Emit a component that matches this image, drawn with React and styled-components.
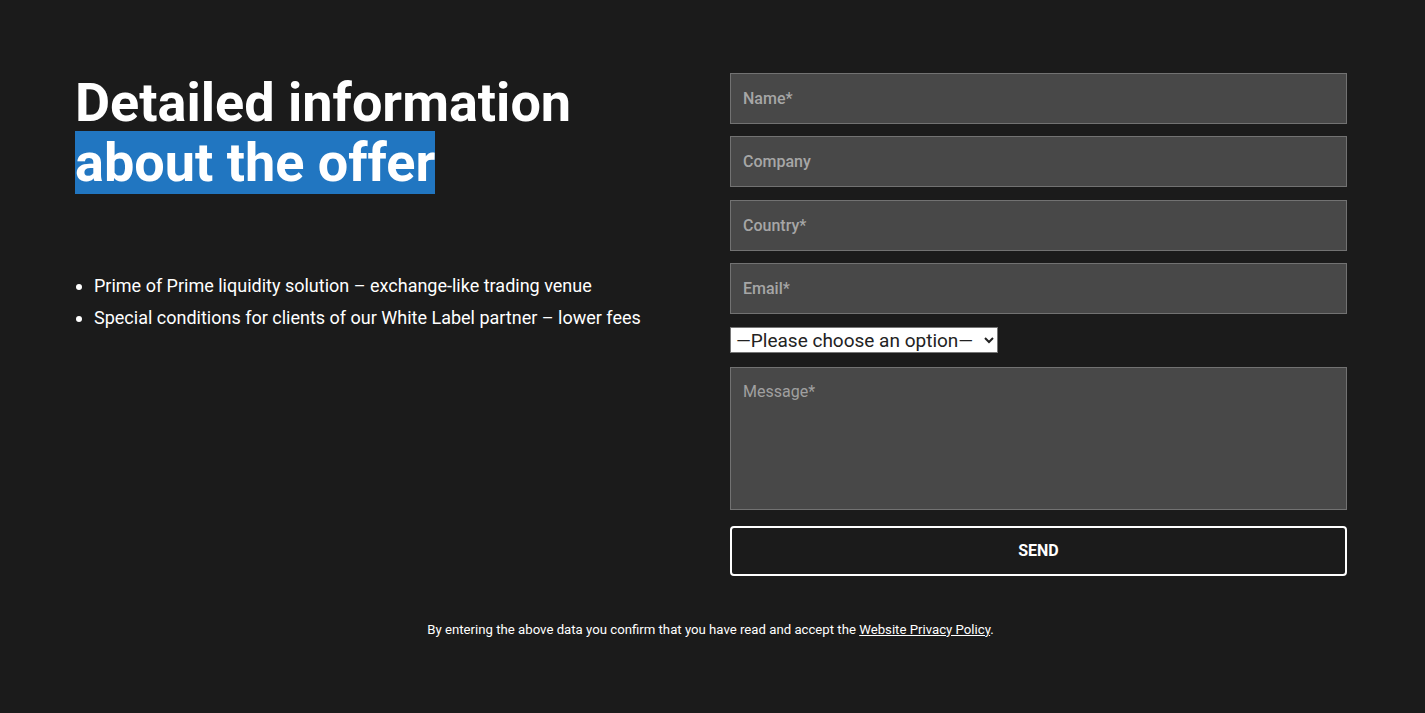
import React from 'react'
import styled, { createGlobalStyle } from 'styled-components'

const GlobalStyle = createGlobalStyle`
  * { box-sizing: border-box; }
  body {
    margin: 0;
    background: #1b1b1b;
    font-family: Roboto, "Liberation Sans", sans-serif;
    color: #fff;
  }
`

export default function App() {
  return (
    <Page>
      <GlobalStyle />
      <Container>
        <InfoColumn>
          <Heading>
            Detailed information
            <br />
            <Highlight>about the offer</Highlight>
          </Heading>
          <Bullets>
            <li>Prime of Prime liquidity solution – exchange-like trading venue</li>
            <li>Special conditions for clients of our White Label partner – lower fees</li>
          </Bullets>
        </InfoColumn>

        <Form onSubmit={e => e.preventDefault()}>
          <Field placeholder="Name*" />
          <Field placeholder="Company" />
          <Field placeholder="Country*" />
          <Field placeholder="Email*" />
          <Select defaultValue="">
            <option value="">—Please choose an option—</option>
          </Select>
          <Message placeholder="Message*" />
          <SendButton type="submit">SEND</SendButton>
        </Form>
      </Container>

      <Notice>
        By entering the above data you confirm that you have read and accept the{' '}
        <a href="#">Website Privacy Policy</a>.
      </Notice>
    </Page>
  )
}

const Page = styled.div`
  min-height: 713px;
  padding-top: 73px;
  padding-bottom: 60px;
`

const Container = styled.div`
  padding: 0 78px 0 75px;
  display: grid;
  grid-template-columns: 1fr 617px;
  gap: 40px;
`

const InfoColumn = styled.div`
  display: flex;
  flex-direction: column;
`

const Heading = styled.h2`
  margin: 0;
  font-size: 54px;
  line-height: 60px;
  font-weight: 700;
  color: #fff;
`

const Highlight = styled.span`
  background: #2176c1;
`

const Bullets = styled.ul`
  margin: 77px 0 0;
  padding-left: 19px;
  font-size: 18px;
  line-height: 32px;
  color: #fff;
`

const Form = styled.form`
  display: flex;
  flex-direction: column;
  gap: 12.4px;
`

const Field = styled.input`
  height: 51px;
  width: 100%;
  background: #484848;
  border: 1px solid #727272;
  padding: 0 12px;
  font-family: Roboto, "Liberation Sans", sans-serif;
  font-size: 16px;
  font-weight: 500;
  color: #fff;
  outline: none;

  &::placeholder {
    color: #a6a6a6;
  }
`

const Select = styled.select`
  align-self: flex-start;
  width: 268px;
  height: 26px;
  margin: 0.4px 0 1.6px;
  font-family: Roboto, "Liberation Sans", sans-serif;
  font-size: 19px;
  color: #222;
  background: #fff;
  border: 1px solid #767676;
  border-radius: 0;
  padding: 0 1px;
`

const Message = styled.textarea`
  height: 143px;
  width: 100%;
  resize: none;
  background: #484848;
  border: 1px solid #727272;
  padding: 14px 12px;
  font-family: Roboto, "Liberation Sans", sans-serif;
  font-size: 16px;
  color: #fff;
  outline: none;

  &::placeholder {
    color: #a0a0a0;
  }
`

const SendButton = styled.button`
  margin-top: 3.6px;
  height: 50px;
  width: 100%;
  background: transparent;
  border: 2px solid #fff;
  border-radius: 4px;
  color: #fff;
  font-family: Roboto, "Liberation Sans", sans-serif;
  font-size: 16px;
  font-weight: 700;
  cursor: pointer;
`

const Notice = styled.p`
  margin: 46px 0 0;
  padding-right: 4px;
  text-align: center;
  font-size: 13.2px;
  color: #fff;

  a {
    color: #fff;
  }
`
